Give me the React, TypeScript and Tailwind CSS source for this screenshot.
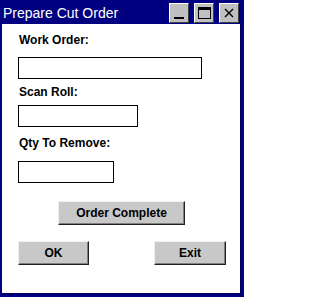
import React from "react";

function TitleButton({ children }: { children: React.ReactNode }) {
  return (
    <div className="w-[20px] h-[20px] bg-[#c0c0c0] border border-t-white border-l-white border-r-[#404040] border-b-[#404040] flex items-center justify-center">
      {children}
    </div>
  );
}

function WinButton({ label, className }: { label: string; className: string }) {
  return (
    <button
      type="button"
      className={
        "h-[24px] bg-[#c8c8c8] border border-t-[#f0f0f0] border-l-[#f0f0f0] border-r-[#202020] border-b-[#202020] shadow-[inset_-1px_-1px_0_#808080] text-[12px] font-bold text-black leading-none " +
        className
      }
    >
      {label}
    </button>
  );
}

export default function App() {
  return (
    <div
      className="w-[244px] h-[297px] bg-[#000080] flex flex-col overflow-hidden"
      style={{ fontFamily: '"Liberation Sans", Arial, sans-serif' }}
    >
      {/* title bar */}
      <div className="h-[24px] flex items-center pl-[3px] pr-[5px]">
        <span className="text-white text-[14px] leading-none flex-1 pt-[1px]">Prepare Cut Order</span>
        <div className="flex gap-[5px] pt-[2px]">
          <TitleButton>
            <div className="w-[10px] h-[2px] bg-black mt-[10px]" />
          </TitleButton>
          <TitleButton>
            <div className="w-[13px] h-[12px] border border-black border-t-[3px]" />
          </TitleButton>
          <TitleButton>
            <svg width="10" height="10" viewBox="0 0 10 10">
              <path d="M1 1 L9 9 M9 1 L1 9" stroke="black" strokeWidth="1.4" />
            </svg>
          </TitleButton>
        </div>
      </div>

      {/* client area */}
      <div className="flex-1 ml-[2px] mr-[3px] mb-[3px] bg-white border-r border-b border-[#00005a] flex flex-col pl-[16px] pt-[9px] text-[12px] font-bold text-black">
        <div className="leading-[14px] pl-[1px]">Work Order:</div>
        <div className="mt-[10px] w-[184px] h-[22px] border border-black" />

        <div className="mt-[6px] leading-[14px] pl-[1px]">Scan Roll:</div>
        <div className="mt-[6px] w-[120px] h-[22px] border border-black" />

        <div className="mt-[9px] leading-[14px] pl-[1px]">Qty To Remove:</div>
        <div className="mt-[11px] w-[96px] h-[22px] border border-black" />

        <div className="mt-[18px] pl-[40px]">
          <WinButton label="Order Complete" className="w-[127px]" />
        </div>

        <div className="mt-[16px] flex">
          <WinButton label="OK" className="w-[71px]" />
          <WinButton label="Exit" className="w-[72px] ml-[65px]" />
        </div>
      </div>
    </div>
  );
}
